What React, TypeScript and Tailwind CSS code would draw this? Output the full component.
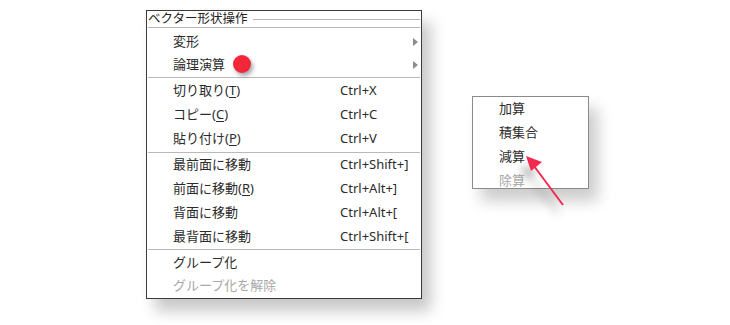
import React from "react";

type Item =
  | { kind: "sep"; cls: string }
  | {
      kind: "item";
      label: string;
      mnemonic?: string;
      shortcut?: string;
      sub?: boolean;
      disabled?: boolean;
      h?: string;
    };

const mainItems: Item[] = [
  { kind: "item", label: "変形", sub: true, h: "h-[22px]" },
  { kind: "item", label: "論理演算", sub: true, h: "h-[23px]" },
  { kind: "sep", cls: "my-[1px]" },
  { kind: "item", label: "切り取り", mnemonic: "T", shortcut: "Ctrl+X" },
  { kind: "item", label: "コピー", mnemonic: "C", shortcut: "Ctrl+C" },
  { kind: "item", label: "貼り付け", mnemonic: "P", shortcut: "Ctrl+V" },
  { kind: "sep", cls: "mt-[1px]" },
  { kind: "item", label: "最前面に移動", shortcut: "Ctrl+Shift+]" },
  { kind: "item", label: "前面に移動", mnemonic: "R", shortcut: "Ctrl+Alt+]" },
  { kind: "item", label: "背面に移動", shortcut: "Ctrl+Alt+[" },
  { kind: "item", label: "最背面に移動", shortcut: "Ctrl+Shift+[" },
  { kind: "sep", cls: "mb-[1px]" },
  { kind: "item", label: "グループ化" },
  { kind: "item", label: "グループ化を解除", disabled: true, h: "h-[22px]" },
];

const subItems = [
  { label: "加算" },
  { label: "積集合" },
  { label: "減算" },
  { label: "除算", disabled: true },
];

const font = "font-['Noto_Sans','Noto_Sans_CJK_JP',sans-serif]";

function SubArrow() {
  return (
    <svg width="5" height="8" viewBox="0 0 5 8" className="absolute right-[3px] top-1/2 -translate-y-1/2">
      <path d="M0 0 L5 4 L0 8 Z" fill="#8c8c8c" />
    </svg>
  );
}

function MainMenu() {
  return (
    <div className="relative w-[276px] h-[289px] bg-white border border-[#3b3b3b] shadow-[9px_12px_14px_rgba(0,0,0,0.22)] overflow-hidden">
      <div className="flex items-center h-[16px] pl-[1px] pr-[1px]">
        <span className="text-[12.5px] leading-none text-[#222] whitespace-nowrap">ベクター形状操作</span>
        <div className="flex-1 ml-[5px] h-px bg-[#b5b5b5]" />
      </div>
      <div className="mx-[1px] h-px bg-[#b5b5b5]" />
      <div className="h-[3px]" />
      {mainItems.map((it, i) =>
        it.kind === "sep" ? (
          <div key={i} className={`mx-[1px] h-px bg-[#b9b9b9] ${it.cls}`} />
        ) : (
          <div key={i} className={`relative flex items-center ${it.h ?? "h-[24px]"} pl-[26px]`}>
            <span className={`w-[167px] text-[13px] whitespace-nowrap ${it.disabled ? "text-[#a8a8a8]" : "text-[#2b2b2b]"}`}>
              {it.label}
              {it.mnemonic && (
                <>
                  (<span className="underline underline-offset-2">{it.mnemonic}</span>)
                </>
              )}
            </span>
            {it.shortcut && <span className="text-[13px] text-[#2b2b2b] whitespace-nowrap">{it.shortcut}</span>}
            {it.sub && <SubArrow />}
          </div>
        )
      )}
    </div>
  );
}

function SubMenu() {
  return (
    <div className="w-[117px] h-[93px] bg-white border border-[#8a8a8a] shadow-[9px_12px_14px_rgba(0,0,0,0.2)] overflow-hidden">
      {subItems.map((s) => (
        <div key={s.label} className="flex items-center h-[24px] pl-[26px]">
          <span className={`text-[13px] whitespace-nowrap ${s.disabled ? "text-[#a8a8a8]" : "text-[#2b2b2b]"}`}>{s.label}</span>
        </div>
      ))}
    </div>
  );
}

export default function App() {
  return (
    <div className={`relative w-[730px] h-[325px] bg-white overflow-hidden ${font}`}>
      <div className="flex items-start pl-[146px] pt-[10px]">
        <MainMenu />
        <div className="ml-[50px] mt-[86px]">
          <SubMenu />
        </div>
      </div>

      {/* red marker dot */}
      <div className="absolute left-[233px] top-[55px] w-[18px] h-[18px] rounded-full bg-[#f4263a] shadow-[2px_3px_4px_rgba(0,0,0,0.35)]" />

      {/* annotation arrow */}
      <svg
        className="absolute left-0 top-0 pointer-events-none"
        width="730"
        height="325"
        style={{ filter: "drop-shadow(-5px 9px 4px rgba(0,0,0,0.3))" }}
      >
        <line x1="563" y1="205" x2="534" y2="166" stroke="#f22a4f" strokeWidth="2" />
        <path d="M526 156 L542 162 L531 171 Z" fill="#f22a4f" />
      </svg>
    </div>
  );
}
